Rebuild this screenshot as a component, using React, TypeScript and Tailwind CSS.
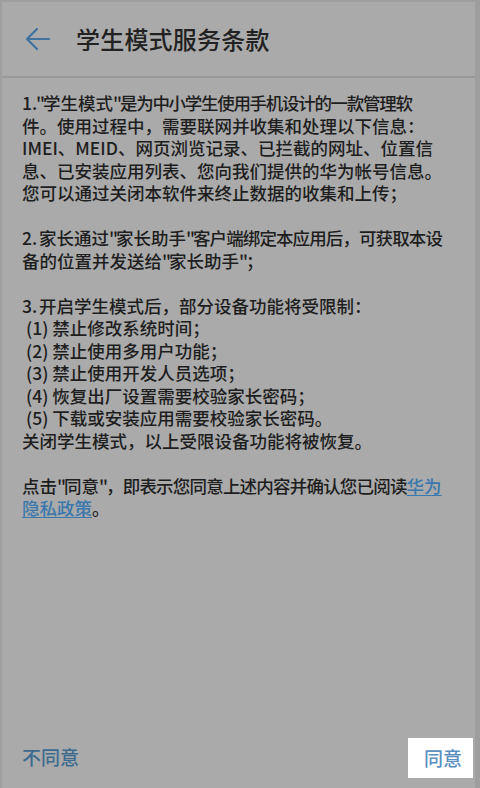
import React from "react";

const font = { fontFamily: '"Noto Sans CJK SC", "Noto Sans", sans-serif' };

function Line({ children }: { children?: React.ReactNode }) {
  return <div className="h-[22.5px] leading-[22.5px] whitespace-nowrap">{children}</div>;
}

function Q() {
  return <span className="inline-block w-[7px] text-center">"</span>;
}

function N({ n, w }: { n: string; w: string }) {
  return <span className={"inline-block " + w}>{n}</span>;
}

export default function App() {
  return (
    <div
      className="w-[480px] h-[788px] bg-[#aaaaaa] flex flex-col border-l-2 border-t-2 border-r-[5px] border-[#9e9e9e] text-[#1e1e1e] overflow-hidden font-medium"
      style={font}
    >
      <div className="h-[76px] flex items-center border-b-2 border-[#9a9a9a] shrink-0">
        <svg width="28" height="28" viewBox="0 0 28 28" className="ml-[21px]" fill="none">
          <path d="M26 14H4M14 4L4 14L14 24" stroke="#3f729e" strokeWidth="2.2" strokeLinecap="round" strokeLinejoin="round" />
        </svg>
        <div className="ml-[25px] text-[24px] leading-none text-[#222222] tracking-[0.2px]">学生模式服务条款</div>
      </div>
      <div className="flex-1 pl-[20px] pt-[14px] text-[17.5px]">
        <Line>
          <N n="1." w="w-[14px]" />
          <Q />学生模式<Q />
          <span className="tracking-[-1.3px]">是为中小学生使用手机设计的一款管理软</span>
        </Line>
        <Line>件。使用过程中，需要联网并收集和处理以下信息：</Line>
        <Line>IMEI、MEID、网页浏览记录、已拦截的网址、位置信</Line>
        <Line>息、已安装应用列表、您向我们提供的华为帐号信息。</Line>
        <Line>您可以通过关闭本软件来终止数据的收集和上传；</Line>
        <Line />
        <Line>
          <N n="2." w="w-[17px]" />家长通过<Q />家长助手<Q />
          <span className="tracking-[-0.9px]">客户端绑定本应用后，可获取本设</span>
        </Line>
        <Line>备的位置并发送给<Q />家长助手<Q />；</Line>
        <Line />
        <Line><N n="3." w="w-[17px]" />开启学生模式后，部分设备功能将受限制：</Line>
        <Line>&nbsp;(1) 禁止修改系统时间；</Line>
        <Line>&nbsp;(2) 禁止使用多用户功能；</Line>
        <Line>&nbsp;(3) 禁止使用开发人员选项；</Line>
        <Line>&nbsp;(4) 恢复出厂设置需要校验家长密码；</Line>
        <Line>&nbsp;(5) 下载或安装应用需要校验家长密码。</Line>
        <Line>关闭学生模式，以上受限设备功能将被恢复。</Line>
        <Line />
        <Line>
          点击<Q />同意<Q />
          <span className="tracking-[-0.8px]">，即表示您同意上述内容并确认您已阅读</span>
          <span className="text-[#3b78ad] underline underline-offset-2">华为</span>
        </Line>
        <Line>
          <span className="text-[#3b78ad] underline underline-offset-2">隐私政策</span>。
        </Line>
      </div>
      <div className="flex items-center justify-between pb-[10px] pl-[20px] pr-[2px] shrink-0">
        <div className="text-[19px] text-[#3d6b8f] pb-[2px]">不同意</div>
        <div className="w-[65px] h-[40px] bg-white flex items-center pl-[16px] text-[19px] text-[#5a8fbf]">同意</div>
      </div>
    </div>
  );
}
